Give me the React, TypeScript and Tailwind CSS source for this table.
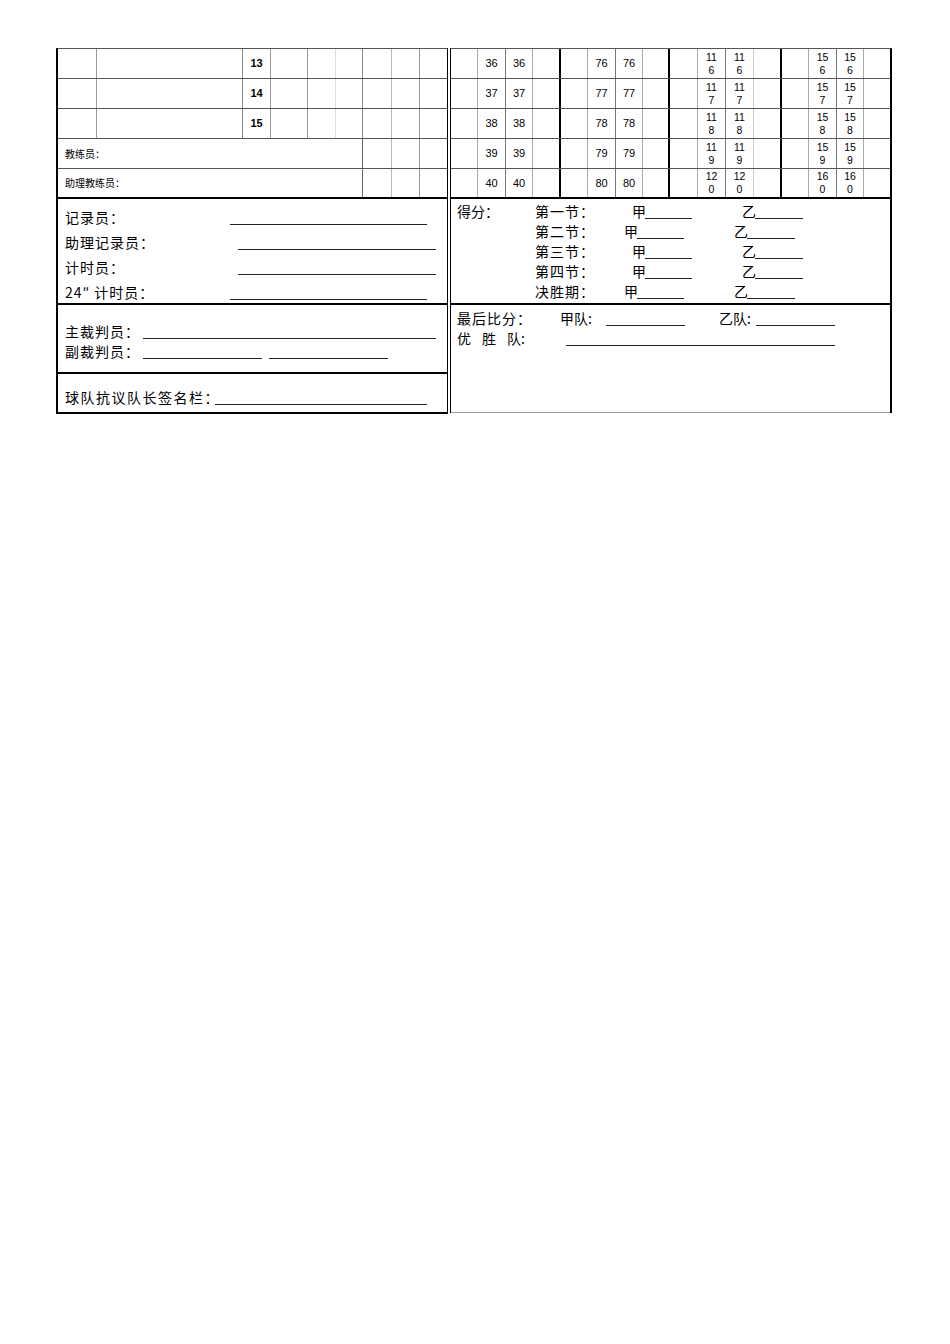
import React from "react";

const CJK = "font-['Noto_Sans_CJK_SC',sans-serif]";
const NUM = "font-['Liberation_Sans',Arial,sans-serif]";

// left table column widths (right border of each cell is the grid line)
const LEFT_COLS = [
  "w-[39px] border-r border-[#999]",
  "w-[146px] border-r border-[#888]",
  "w-[28px] border-r border-[#999]",
  "w-[37px] border-r border-[#999]",
  "w-[28px] border-r border-[#ddd]",
  "w-[27px] border-r border-[#888]",
  "w-[29px] border-r border-[#bbb]",
  "w-[28px] border-r border-[#999]",
  "w-[27px]",
];

const RIGHT_COLS = [
  "w-[27px] border-r border-[#aaa]",
  "w-[28px] border-r border-[#777]",
  "w-[27px] border-r border-[#aaa]",
  "w-[28px] border-r-2 border-black",
  "w-[27px] border-r border-[#aaa]",
  "w-[28px] border-r border-[#777]",
  "w-[27px] border-r border-[#aaa]",
  "w-[27px] border-r-2 border-black",
  "w-[28px] border-r border-[#aaa]",
  "w-[28px] border-r border-[#777]",
  "w-[28px] border-r border-[#ccc]",
  "w-[28px] border-r-2 border-black",
  "w-[27px] border-r border-[#aaa]",
  "w-[28px] border-r border-[#777]",
  "w-[27px] border-r border-[#aaa]",
  "w-[26px]",
];

const PLAYER_NOS = [13, 14, 15];
const SCORE_ROWS = [36, 37, 38, 39, 40];

function Num({ n }: { n: number }) {
  const s = String(n);
  if (s.length < 3) return <span className={`${NUM} text-[11px] leading-none`}>{s}</span>;
  return (
    <span className={`${NUM} text-[10.5px] leading-[13px] text-center`}>
      {s.slice(0, 2)}
      <br />
      {s.slice(2)}
    </span>
  );
}

function Line({ w }: { w: string }) {
  return <span className={`${w} h-[16px] border-b border-[#222] shrink-0`} />;
}

function LeftBlock() {
  return (
    <div className="w-[392px] border-l-2 border-r border-t border-l-black border-r-black border-t-[#555] flex flex-col">
      {PLAYER_NOS.map((n) => (
        <div key={n} className="flex h-[30px] border-b border-[#555]">
          {LEFT_COLS.map((c, i) => (
            <div key={i} className={`${c} h-full flex items-center justify-center`}>
              {i === 2 && <span className={`${NUM} text-[11px] font-bold leading-none`}>{n}</span>}
            </div>
          ))}
        </div>
      ))}
      {["教练员：", "助理教练员："].map((label, r) => (
        <div
          key={label}
          className={`flex h-[30px] ${r === 0 ? "border-b border-[#555]" : "border-b-2 border-black"}`}
        >
          <div className={`w-[305px] h-full border-r border-[#666] flex items-center pl-[7px] ${CJK} text-[10px] leading-none`}>
            {label}
          </div>
          {LEFT_COLS.slice(6).map((c, i) => (
            <div key={i} className={`${c} h-full`} />
          ))}
        </div>
      ))}

      {/* officials */}
      <div className={`h-[106px] border-b-2 border-black pt-[5px] ${CJK} text-[14px] tracking-[1px] text-black`}>
        <div className="flex h-[25px] items-center pl-[7px] leading-none">
          <span className="w-[165px] shrink-0">记录员：</span>
          <Line w="w-[197px]" />
        </div>
        <div className="flex h-[25px] items-center pl-[7px] leading-none">
          <span className="w-[173px] shrink-0">助理记录员：</span>
          <Line w="w-[198px]" />
        </div>
        <div className="flex h-[25px] items-center pl-[7px] leading-none">
          <span className="w-[173px] shrink-0">计时员：</span>
          <Line w="w-[198px]" />
        </div>
        <div className="flex h-[25px] items-center pl-[7px] leading-none">
          <span className="w-[165px] shrink-0">24″ 计时员：</span>
          <Line w="w-[197px]" />
        </div>
      </div>

      {/* referees */}
      <div className={`h-[69px] border-b-2 border-black pt-[16px] ${CJK} text-[14px] tracking-[1px]`}>
        <div className="flex h-[20px] items-center pl-[7px] leading-none">
          <span className="w-[78px] shrink-0">主裁判员：</span>
          <Line w="w-[293px]" />
        </div>
        <div className="flex h-[20px] items-center pl-[7px] leading-none">
          <span className="w-[78px] shrink-0">副裁判员：</span>
          <Line w="w-[119px]" />
          <span className="w-[7px] shrink-0" />
          <Line w="w-[119px]" />
        </div>
      </div>

      {/* protest */}
      <div className={`h-[40px] border-b-2 border-black pt-[13px] ${CJK} text-[14px] tracking-[1.5px]`}>
        <div className="flex h-[20px] items-center pl-[7px] leading-none">
          <span className="w-[150px] shrink-0 whitespace-nowrap">球队抗议队长签名栏：</span>
          <Line w="w-[212px]" />
        </div>
      </div>
    </div>
  );
}

const PERIODS = [
  { label: "第一节：", w: "w-[97px]" },
  { label: "第二节：", w: "w-[89px]" },
  { label: "第三节：", w: "w-[97px]" },
  { label: "第四节：", w: "w-[97px]" },
  { label: "决胜期：", w: "w-[89px]" },
];

function RightBlock() {
  return (
    <div className="w-[442px] border-l border-r-2 border-t border-l-black border-r-black border-t-[#555] flex flex-col">
      {SCORE_ROWS.map((n, r) => {
        const vals = [n, n + 40, n + 80, n + 120];
        return (
          <div
            key={n}
            className={`flex h-[30px] ${r === 4 ? "border-b-2 border-black" : "border-b border-[#555]"}`}
          >
            {RIGHT_COLS.map((c, i) => {
              const k = i % 4;
              const v = vals[Math.floor(i / 4)];
              return (
                <div key={i} className={`${c} h-full flex items-center justify-center`}>
                  {(k === 1 || k === 2) && <Num n={v} />}
                </div>
              );
            })}
          </div>
        );
      })}

      {/* period scores */}
      <div className={`h-[106px] border-b-2 border-black pt-[2px] pl-[6px] ${CJK} text-[14px]`}>
        {PERIODS.map((p, i) => (
          <div key={p.label} className="flex h-[20px] items-center leading-none">
            <span className="w-[78px] shrink-0">{i === 0 ? "得分：" : ""}</span>
            <span className={`${p.w} shrink-0 tracking-[1px]`}>{p.label}</span>
            <span className="w-[13px] shrink-0">甲</span>
            <Line w="w-[47px]" />
            <span className="w-[50px] shrink-0" />
            <span className="w-[13px] shrink-0">乙</span>
            <Line w="w-[48px]" />
          </div>
        ))}
      </div>

      {/* final */}
      <div className={`h-[108px] border-b border-[#999] pt-[3px] pl-[6px] ${CJK} text-[14px]`}>
        <div className="flex h-[20px] items-center leading-none">
          <span className="w-[103px] shrink-0 tracking-[1px]">最后比分：</span>
          <span className="w-[46px] shrink-0 whitespace-nowrap">甲队:</span>
          <Line w="w-[79px]" />
          <span className="w-[34px] shrink-0" />
          <span className="w-[37px] shrink-0 whitespace-nowrap">乙队:</span>
          <Line w="w-[79px]" />
        </div>
        <div className="flex h-[20px] items-center leading-none">
          <span className="w-[109px] shrink-0 whitespace-nowrap">
            <span className="tracking-[11px]">优胜</span>队:
          </span>
          <Line w="w-[269px]" />
        </div>
      </div>
    </div>
  );
}

export default function App() {
  return (
    <div className="min-h-[1344px] bg-white text-black">
      <div className="pt-[48px] pl-[56px] flex items-start gap-[2px]">
        <LeftBlock />
        <RightBlock />
      </div>
    </div>
  );
}
